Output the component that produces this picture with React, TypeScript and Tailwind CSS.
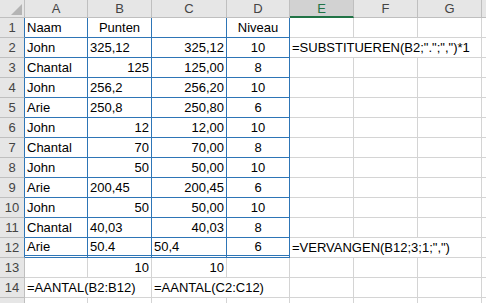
type Align = 'l' | 'r' | 'c'
type Cell = { t?: string; a?: Align; span?: number }

const letters = ['A', 'B', 'C', 'D', 'E', 'F', 'G', '']

// one entry per row, cells from column A; span lets text run over empty neighbours
const rows: Cell[][] = [
  [{ t: 'Naam' }, { t: 'Punten', a: 'c' }, {}, { t: 'Niveau', a: 'c' }, {}, {}, {}, {}],
  [{ t: 'John' }, { t: '325,12' }, { t: '325,12', a: 'r' }, { t: '10', a: 'c' }, { t: '=SUBSTITUEREN(B2;".";",")*1', span: 3 }, {}],
  [{ t: 'Chantal' }, { t: '125', a: 'r' }, { t: '125,00', a: 'r' }, { t: '8', a: 'c' }, {}, {}, {}, {}],
  [{ t: 'John' }, { t: '256,2' }, { t: '256,20', a: 'r' }, { t: '10', a: 'c' }, {}, {}, {}, {}],
  [{ t: 'Arie' }, { t: '250,8' }, { t: '250,80', a: 'r' }, { t: '6', a: 'c' }, {}, {}, {}, {}],
  [{ t: 'John' }, { t: '12', a: 'r' }, { t: '12,00', a: 'r' }, { t: '10', a: 'c' }, {}, {}, {}, {}],
  [{ t: 'Chantal' }, { t: '70', a: 'r' }, { t: '70,00', a: 'r' }, { t: '8', a: 'c' }, {}, {}, {}, {}],
  [{ t: 'John' }, { t: '50', a: 'r' }, { t: '50,00', a: 'r' }, { t: '10', a: 'c' }, {}, {}, {}, {}],
  [{ t: 'Arie' }, { t: '200,45' }, { t: '200,45', a: 'r' }, { t: '6', a: 'c' }, {}, {}, {}, {}],
  [{ t: 'John' }, { t: '50', a: 'r' }, { t: '50,00', a: 'r' }, { t: '10', a: 'c' }, {}, {}, {}, {}],
  [{ t: 'Chantal' }, { t: '40,03' }, { t: '40,03', a: 'r' }, { t: '8', a: 'c' }, {}, {}, {}, {}],
  [{ t: 'Arie' }, { t: '50.4' }, { t: '50,4' }, { t: '6', a: 'c' }, { t: '=VERVANGEN(B12;3;1;",")', span: 3 }, {}],
  [{}, { t: '10', a: 'r' }, { t: '10', a: 'r' }, {}, {}, {}, {}, {}],
  [{ t: '=AANTAL(B2:B12)', span: 2 }, { t: '=AANTAL(C2:C12)', span: 2 }, {}, {}, {}, {}],
  [{}, {}, {}, {}, {}, {}, {}, {}],
]

const alignClass = (a?: Align) =>
  a === 'r' ? 'justify-end pr-[2px]' : a === 'c' ? 'justify-center' : 'justify-start pl-[2px]'

const spanClass = (n?: number) => (n === 3 ? 'col-span-3' : n === 2 ? 'col-span-2' : '')

function SheetCell({ cell, row, col }: { cell: Cell; row: number; col: number }) {
  const inTable = row <= 12 && col <= 3
  const right = inTable ? 'border-r border-r-[#2e75b6]' : 'border-r border-r-[#d4d4d4]'
  let bottom = inTable ? 'border-b border-b-[#2e75b6]' : 'border-b border-b-[#d4d4d4]'
  if (row === 12 && col <= 3) bottom = 'border-b-[3px] border-double border-b-[#2e75b6]'

  return (
    <div
      className={`h-[20px] flex items-center whitespace-nowrap overflow-hidden text-black ${right} ${bottom} ${alignClass(cell.a)} ${spanClass(cell.span)}`}
    >
      {cell.t}
    </div>
  )
}

export default function App() {
  return (
    <div
      className="w-[486px] h-[303px] overflow-hidden bg-white text-[13px] leading-none"
      style={{ fontFamily: '"Liberation Sans", Arial, sans-serif' }}
    >
      <div className="grid grid-cols-[25px_63px_64px_75px_63px_64px_64px_64px_64px] w-[546px]">
        {/* corner */}
        <div className="h-[18px] bg-[#e6e6e6] border-r border-b border-[#bfbfbf] flex items-end justify-end p-[2px]">
          <svg width="11" height="11" viewBox="0 0 11 11">
            <polygon points="11,0 11,11 0,11" fill="#b4b4b4" />
          </svg>
        </div>
        {letters.map((l, i) =>
          l === 'E' ? (
            <div
              key={i}
              className="h-[18px] bg-[#d2d2d2] border-r border-r-[#bfbfbf] border-b-2 border-b-[#217346] flex items-center justify-center text-[#217346]"
            >
              {l}
            </div>
          ) : (
            <div
              key={i}
              className="h-[18px] bg-[#e6e6e6] border-r border-b border-[#bfbfbf] flex items-center justify-center text-[#444]"
            >
              {l}
            </div>
          )
        )}

        {rows.map((cells, r) => {
          const row = r + 1
          let col = 0
          return [
            <div
              key={`h${row}`}
              className={`h-[20px] bg-[#e6e6e6] border-b border-b-[#bfbfbf] flex items-center justify-center text-[#444] ${
                row <= 12 ? 'border-r border-r-[#2e75b6]' : 'border-r border-r-[#bfbfbf]'
              }`}
            >
              {/* the last row only peeks in at the bottom edge */}
              {row < rows.length ? row : ''}
            </div>,
            ...cells.map((cell, i) => {
              const el = <SheetCell key={`${row}-${i}`} cell={cell} row={row} col={col} />
              col += cell.span ?? 1
              return el
            }),
          ]
        })}
      </div>
    </div>
  )
}
